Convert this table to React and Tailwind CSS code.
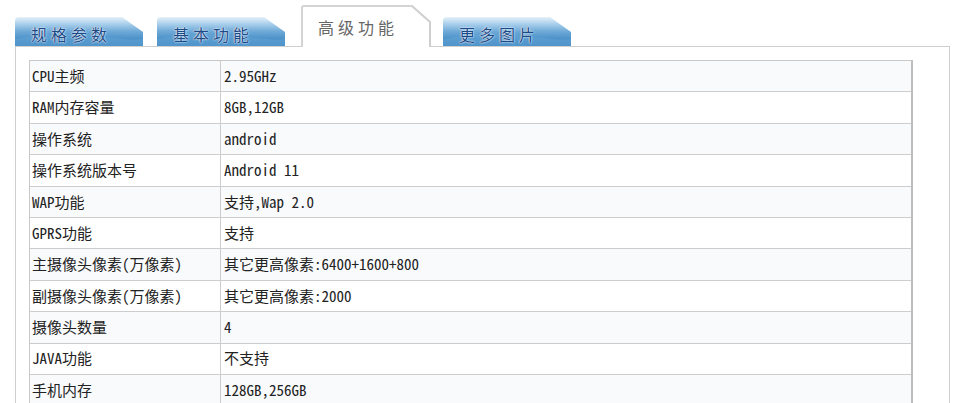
const rows = [
  ["CPU主频", "2.95GHz"],
  ["RAM内存容量", "8GB,12GB"],
  ["操作系统", "android"],
  ["操作系统版本号", "Android 11"],
  ["WAP功能", "支持,Wap 2.0"],
  ["GPRS功能", "支持"],
  ["主摄像头像素(万像素)", "其它更高像素:6400+1600+800"],
  ["副摄像头像素(万像素)", "其它更高像素:2000"],
  ["摄像头数量", "4"],
  ["JAVA功能", "不支持"],
  ["手机内存", "128GB,256GB"],
];

function BlueTab({ label, className }) {
  const id = "g" + label.length + label.charCodeAt(0);
  return (
    <div className={"relative h-[29px] w-[128px] shrink-0 " + className}>
      <svg className="absolute inset-0" width="128" height="29" viewBox="0 0 128 29">
        <defs>
          <linearGradient id={id} x1="0" y1="0" x2="0" y2="1">
            <stop offset="0" stopColor="#e6f1f9" />
            <stop offset="0.2" stopColor="#b3d5ee" />
            <stop offset="0.5" stopColor="#6ea9d7" />
            <stop offset="0.75" stopColor="#4c92c9" />
            <stop offset="1" stopColor="#3f86c1" />
          </linearGradient>
        </defs>
        <path d="M0,4 Q0,0 4,0 H107 L128,15 V29 H0 Z" fill={"url(#" + id + ")"} />
        <path d="M0,22 Q40,14 90,20 T128,18 V29 H0 Z" fill="#6fb0de" opacity="0.35" />
      </svg>
      <div className="relative flex h-full items-center pl-[16px] pt-[4px] text-[16px] tracking-[4px] text-[#1b4a86] [text-shadow:0_0_2px_#fff,0_0_1px_#fff]">
        {label}
      </div>
    </div>
  );
}

function ActiveTab({ label }) {
  return (
    <div className="relative z-10 -mb-px h-[42px] w-[132px] shrink-0">
      <svg className="absolute inset-0" width="132" height="42" viewBox="0 0 132 42">
        <path d="M1,42 V3 Q1,1 3,1 H111 L129,17 V42" fill="#fff" stroke="#cfcfcf" strokeWidth="2" />
        <path d="M1,42 V3 Q1,1 3,1 H111" fill="none" stroke="#d8d8d8" strokeWidth="1" />
      </svg>
      <div className="relative flex h-full items-center pl-[17px] pt-[2px] text-[16px] tracking-[4px] text-[#666]">
        {label}
      </div>
    </div>
  );
}

export default function App() {
  return (
    <div className="h-[403px] w-[958px] overflow-hidden bg-white font-['Noto_Sans_Mono_CJK_SC','Noto_Sans_CJK_SC',monospace]">
      <div className="flex items-end pl-[15px] pt-[5px]">
        <BlueTab label="规格参数" className="" />
        <BlueTab label="基本功能" className="ml-[14px]" />
        <div className="ml-[16px]">
          <ActiveTab label="高级功能" />
        </div>
        <BlueTab label="更多图片" className="ml-[10px]" />
      </div>
      <div className="ml-[15px] w-[935px] border-l border-r border-t border-[#cfcfcf] pl-[13px] pt-[13px]">
        <div className="w-[884px] border-l border-r-2 border-t border-[#c8c8c8] border-r-[#bdbdbd]">
          {rows.map(([k, v], i) => (
            <div
              key={k}
              className={
                "flex h-[31.4px] items-center border-b border-[#cdcdcd] text-[15px] text-[#222] " +
                (i % 2 === 0 ? "bg-[#f9fafc]" : "bg-white")
              }
            >
              <div className="flex h-full w-[191px] items-center border-r border-[#cdcdcd] pl-[2px]">{k}</div>
              <div className="flex h-full items-center pl-[3px]">{v}</div>
            </div>
          ))}
        </div>
      </div>
    </div>
  );
}
